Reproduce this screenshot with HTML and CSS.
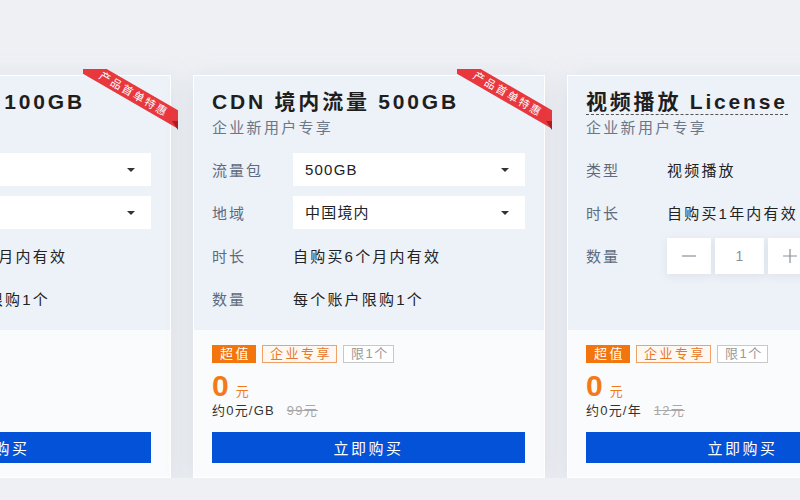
FILE: index.html
```html
<!DOCTYPE html>
<html>

<head>
    <meta charset="UTF-8">
    <title>新用户专享</title>
    <link rel="stylesheet" href="styles.css">
</head>

<body>
    <div class="cards">
        <!-- CDN 100GB -->
        <div class="card">
            <div class="ribbon"><div class="ribbon-band">产品首单特惠</div></div>
            <div class="card-top">
                <div class="title"><span>CDN 境内流量 100GB</span></div>
                <div class="subtitle">企业新用户专享</div>
                <div class="row">
                    <div class="label">流量包</div>
                    <div class="select">100GB<i class="caret"></i></div>
                </div>
                <div class="row">
                    <div class="label">地域</div>
                    <div class="select">中国境内<i class="caret"></i></div>
                </div>
                <div class="row">
                    <div class="label">时长</div>
                    <div class="value">自购买6个月内有效</div>
                </div>
                <div class="row">
                    <div class="label">数量</div>
                    <div class="value">每个账户限购1个</div>
                </div>
            </div>
            <div class="card-bottom">
                <div class="tags">
                    <span class="tag tag-hot">超值</span>
                    <span class="tag tag-orange">企业专享</span>
                </div>
                <div class="price"><b>0</b><span>元</span></div>
                <div class="unit">约0元/GB<s>49元</s></div>
                <button class="buy">立即购买</button>
            </div>
        </div>

        <!-- CDN 500GB -->
        <div class="card">
            <div class="ribbon"><div class="ribbon-band">产品首单特惠</div></div>
            <div class="card-top">
                <div class="title"><span>CDN 境内流量 500GB</span></div>
                <div class="subtitle">企业新用户专享</div>
                <div class="row">
                    <div class="label">流量包</div>
                    <div class="select">500GB<i class="caret"></i></div>
                </div>
                <div class="row">
                    <div class="label">地域</div>
                    <div class="select">中国境内<i class="caret"></i></div>
                </div>
                <div class="row">
                    <div class="label">时长</div>
                    <div class="value">自购买6个月内有效</div>
                </div>
                <div class="row">
                    <div class="label">数量</div>
                    <div class="value">每个账户限购1个</div>
                </div>
            </div>
            <div class="card-bottom">
                <div class="tags">
                    <span class="tag tag-hot">超值</span>
                    <span class="tag tag-orange">企业专享</span>
                    <span class="tag tag-gray">限1个</span>
                </div>
                <div class="price"><b>0</b><span>元</span></div>
                <div class="unit">约0元/GB<s>99元</s></div>
                <button class="buy">立即购买</button>
            </div>
        </div>

        <!-- License -->
        <div class="card">
            <div class="card-top">
                <div class="title"><span class="dashed">视频播放 License</span></div>
                <div class="subtitle">企业新用户专享</div>
                <div class="row">
                    <div class="label">类型</div>
                    <div class="value">视频播放</div>
                </div>
                <div class="row">
                    <div class="label">时长</div>
                    <div class="value">自购买1年内有效</div>
                </div>
                <div class="row">
                    <div class="label">数量</div>
                    <div class="stepper">
                        <div class="step">
                            <svg width="16" height="16" viewBox="0 0 16 16"><path d="M1 8h14" stroke="#8a919c" stroke-width="1.2"/></svg>
                        </div>
                        <div class="step step-num">1</div>
                        <div class="step">
                            <svg width="16" height="16" viewBox="0 0 16 16"><path d="M1 8h14M8 1v14" stroke="#8a919c" stroke-width="1.2"/></svg>
                        </div>
                    </div>
                </div>
                <div class="row"></div>
            </div>
            <div class="card-bottom">
                <div class="tags">
                    <span class="tag tag-hot">超值</span>
                    <span class="tag tag-orange">企业专享</span>
                    <span class="tag tag-gray">限1个</span>
                </div>
                <div class="price"><b>0</b><span>元</span></div>
                <div class="unit">约0元/年<s>12元</s></div>
                <button class="buy">立即购买</button>
            </div>
        </div>
    </div>
</body>

</html>
```

FILE: styles.css
```css
/* Page */
body {
    margin: 0;
    background-color: #eef0f4;
    font-family: "Liberation Sans", "Noto Sans CJK SC", sans-serif;
    color: #222222;
    overflow: hidden;
}

.cards {
    display: flex;
    gap: 22px;
    padding-top: 75px;
    margin-left: -181px;
}

/* Card */
.card {
    position: relative;
    flex: 0 0 352px;
    box-sizing: border-box;
    border: 1px solid #ffffff;
    background-color: #fafbfd;
    box-shadow: 0 6px 24px rgba(160, 170, 190, 0.25);
}

.card-top {
    background-color: #edf1f8;
    padding: 13px 19px 15px 18px;
}

.card-bottom {
    padding: 15px 19px 14px 18px;
}

.title {
    height: 28px;
}

.title span {
    display: inline-block;
    font-size: 21px;
    line-height: 25px;
    font-weight: 600;
    letter-spacing: 2.8px;
    color: #1e1e1e;
    border-bottom: 1px dashed transparent;
}

.title .dashed {
    border-bottom-color: #555555;
}

.subtitle {
    font-size: 15px;
    line-height: 22px;
    letter-spacing: 2.3px;
    color: #6a7789;
    margin-bottom: 14px;
}

/* Option rows */
.row {
    display: flex;
    align-items: center;
    height: 33px;
    margin-bottom: 10px;
}

.row:last-child {
    margin-bottom: 0;
}

.label {
    width: 81px;
    font-size: 15px;
    letter-spacing: 2px;
    color: #5e6b7d;
}

.value {
    font-size: 15px;
    letter-spacing: 2.2px;
    color: #222222;
}

.select {
    position: relative;
    flex: 1;
    height: 33px;
    line-height: 33px;
    background-color: #ffffff;
    padding-left: 12px;
    font-size: 15px;
    letter-spacing: 1.2px;
    color: #222222;
}

.caret {
    position: absolute;
    right: 16px;
    top: 15px;
    border-left: 4px solid transparent;
    border-right: 4px solid transparent;
    border-top: 4px solid #333333;
}

/* Quantity stepper */
.stepper {
    display: flex;
    gap: 4px;
}

.step {
    width: 44px;
    height: 36px;
    background-color: #ffffff;
    box-shadow: 0 2px 8px rgba(150, 160, 180, 0.18);
    display: flex;
    align-items: center;
    justify-content: center;
}

.step-num {
    width: 49px;
    font-size: 14px;
    color: #8a919c;
}

/* Corner ribbon */
.ribbon {
    position: absolute;
    top: -7px;
    right: -8px;
    width: 95px;
    height: 61px;
    overflow: hidden;
}

.ribbon-band {
    position: absolute;
    left: -14px;
    top: 17px;
    width: 130px;
    height: 16px;
    line-height: 16px;
    background-color: #e8373d;
    color: #ffffff;
    font-size: 11px;
    letter-spacing: 2px;
    text-align: center;
    transform: rotate(30deg);
}

.ribbon::after {
    content: "";
    position: absolute;
    right: 0;
    bottom: 0;
    border-top: 9px solid #a81c22;
    border-left: 6px solid transparent;
}

/* Tags and price */
.tags {
    display: flex;
    gap: 6px;
}

.tag {
    box-sizing: border-box;
    height: 18px;
    line-height: 16px;
    padding: 0 4px 0 7px;
    font-size: 13px;
    letter-spacing: 2.5px;
    border: 1px solid;
}

.tag-hot {
    background-color: #f3750d;
    border-color: #f3750d;
    color: #ffffff;
}

.tag-orange {
    background-color: #fff8f2;
    border-color: #eea26a;
    color: #e6782c;
}

.tag-gray {
    background-color: #ffffff;
    border-color: #c8c8c8;
    color: #999999;
    letter-spacing: 1.5px;
}

.price {
    margin-top: 8px;
    height: 30px;
    line-height: 30px;
    color: #f27a18;
}

.price b {
    font-size: 30px;
    font-weight: 600;
}

.price span {
    font-size: 13px;
    margin-left: 7px;
}

.unit {
    margin-top: 2px;
    font-size: 13px;
    line-height: 16px;
    letter-spacing: 1.2px;
    color: #333333;
}

.unit s {
    margin-left: 12px;
    color: #a8a8a8;
}

button.buy {
    display: block;
    width: 100%;
    height: 31px;
    margin-top: 13px;
    border: none;
    background-color: #0452d8;
    color: #ffffff;
    font-family: inherit;
    font-size: 15px;
    letter-spacing: 2.5px;
    cursor: pointer;
}

button.buy:hover {
    background-color: #0342b0;
}
```
